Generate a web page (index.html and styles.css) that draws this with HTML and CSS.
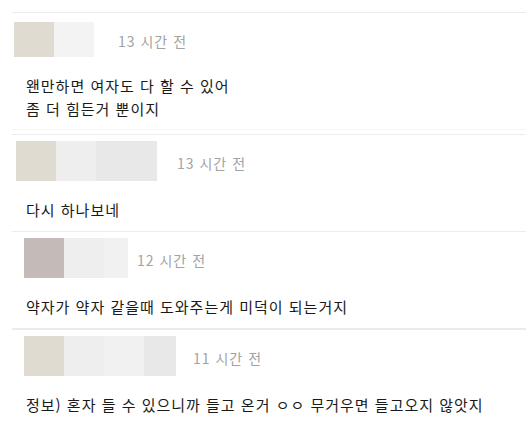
FILE: index.html
```html
<!DOCTYPE html>
<html lang="ko">

<head>
    <meta charset="UTF-8">
    <meta name="viewport" content="width=device-width, initial-scale=1.0">
    <title>댓글</title>

    <link rel="stylesheet" href="styles.css">
</head>

<body>
    <div id="comments">
        <div class="comment first">
            <div class="head">
                <div class="profile p1">
                    <span class="blur tan"></span>
                    <span class="blur light"></span>
                </div>
                <span class="time">13 시간 전</span>
            </div>
            <p class="text">왠만하면 여자도 다 할 수 있어<br>좀 더 힘든거 뿐이지</p>
        </div>

        <div class="comment">
            <div class="head">
                <div class="profile p2">
                    <span class="blur tan"></span>
                    <span class="blur light"></span>
                    <span class="blur grey wide"></span>
                </div>
                <span class="time">13 시간 전</span>
            </div>
            <p class="text">다시 하나보네</p>
        </div>

        <div class="comment">
            <div class="head">
                <div class="profile p3">
                    <span class="blur mauve"></span>
                    <span class="blur light"></span>
                    <span class="blur pale short"></span>
                </div>
                <span class="time">12 시간 전</span>
            </div>
            <p class="text">약자가 약자 같을때 도와주는게 미덕이 되는거지</p>
        </div>

        <div class="comment thick">
            <div class="head">
                <div class="profile p4">
                    <span class="blur tan"></span>
                    <span class="blur light"></span>
                    <span class="blur pale"></span>
                    <span class="blur grey mid"></span>
                </div>
                <span class="time">11 시간 전</span>
            </div>
            <p class="text">정보) 혼자 들 수 있으니까 들고 온거 ㅇㅇ 무거우면 들고오지 않앗지</p>
        </div>
    </div>
</body>

</html>
```

FILE: styles.css
```css
body {
    margin: 0;
    background-color: #fff;
    font-family: "Noto Sans CJK KR", "Noto Sans", sans-serif;
    font-size: 14px;
    letter-spacing: 1px;
    color: #1a1a1a;
}

#comments {
    padding: 12px 0 0 12px;
}

.comment {
    border-top: 1px solid #ececec;
    padding: 6px 0 10px;
}

.comment.first {
    border-bottom: 1px solid #f6f6f6;
    margin-bottom: 4px;
    padding-bottom: 9px;
}

.comment.thick {
    border-top: 2px solid #ebebeb;
}

.head {
    display: flex;
    align-items: center;
    height: 40px;
}

.profile {
    display: flex;
    height: 40px;
}

.p1 {
    height: 35px;
    margin-left: 2px;
    margin-right: 24px;
}

.p2 {
    margin-left: 4px;
    margin-right: 20px;
}

.p3 {
    margin-left: 12px;
    margin-right: 9px;
}

.p4 {
    margin-left: 12px;
    margin-right: 17px;
}

.blur {
    display: block;
    width: 40px;
    height: 100%;
}

.blur.wide {
    width: 61px;
}

.blur.short {
    width: 24px;
}

.blur.mid {
    width: 32px;
}

.tan {
    background-color: #dfdbd0;
}

.mauve {
    background-color: #c4bab8;
}

.light {
    background-color: #eeeeee;
}

.pale {
    background-color: #f1f1f1;
}

.grey {
    background-color: #e8e8e8;
}

.p1 .light {
    background-color: #f3f3f3;
}

.time {
    color: #a3a3a3;
    padding-top: 3px;
}

.text {
    margin: 18px 0 0 14px;
    font-size: 15px;
    line-height: 23px;
}

.first .text {
    margin-top: 15px;
}

.comment + .comment .text {
    margin-top: 17px;
}
```
